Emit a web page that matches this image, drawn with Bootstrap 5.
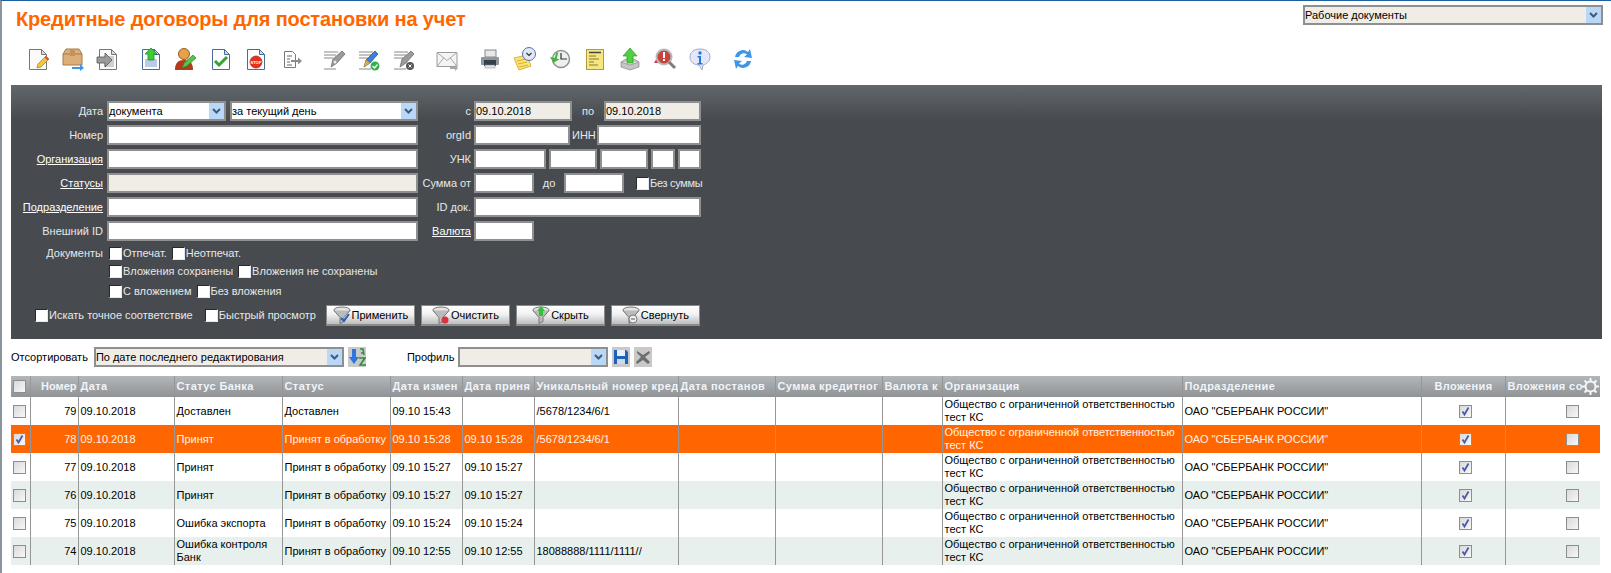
<!DOCTYPE html>
<html lang="ru">
<head>
    <meta charset="UTF-8">
    <title>Кредитные договоры для постановки на учет</title>
    <link href="https://cdn.jsdelivr.net/npm/bootstrap@5.3.2/dist/css/bootstrap.min.css" rel="stylesheet">
    <style>
        body {
            font: 11px/13px "Liberation Sans", Arial, sans-serif;
            color: #000;
            background: #fff;
            border-left: 2px solid #8c949b;
            border-top: 1px solid #1d5f9f;
            min-height: 573px;
            overflow: hidden;
        }
        .page-head { height: 46px; padding: 4px 8px 0 14px; }
        .page-title { font: bold 20px/28px "Liberation Sans", Arial, sans-serif; letter-spacing: -.15px; color: #ff6600; margin: 0; }
        .tool-strip { height: 24px; padding-left: 18px; margin-bottom: 14px; }
        .tool-btn { width: 35px; height: 24px; display: flex; justify-content: center; }
        .tool-gap { margin-left: 8px; }

        .filter-panel {
            margin: 0 9px;
            height: 254px;
            padding-top: 16px;
            color: #e6e8ea;
            background: linear-gradient(#62676b, #474b4f 34px);
        }
        .filter-panel a { color: #fff; }
        .frow { display: flex; height: 24px; }
        .chk-row { display: flex; align-items: center; height: 18px; padding-left: 98px; }
        .chk-first { margin-top: -1px; }
        .chk-third { margin-top: 2px; }
        .apply-row { display: flex; align-items: center; margin-top: 5px; padding-left: 24px; }
        .lab-left { width: 92px; margin-right: 4px; text-align: right; line-height: 21px; white-space: nowrap; }
        .lab-right { width: 56px; padding-right: 3px; text-align: right; line-height: 21px; white-space: nowrap; }
        .lab-to { width: 32px; text-align: center; line-height: 21px; }
        .lab-inn { width: 27px; padding-left: 2px; line-height: 21px; }
        .lab-sum-to { width: 30px; text-align: center; line-height: 21px; }
        .unk-group { display: flex; gap: 3px; }
        .no-sum { display: flex; align-items: center; height: 20px; margin-left: 12px; letter-spacing: -.3px; }

        .fld, .fld-sel {
            height: 20px;
            padding: 0;
            font: 11px/16px "Liberation Sans", Arial, sans-serif;
            color: #000;
            border: 2px solid #8f8f8f;
            border-radius: 0;
            background-color: #fff;
            outline: none;
            box-shadow: none;
            min-height: 0;
        }
        .fld[readonly] { background-color: #f0ede6; }
        .fld-sel {
            appearance: none;
            padding-right: 16px;
            background-image: url("data:image/svg+xml,%3Csvg xmlns='http://www.w3.org/2000/svg' width='15' height='20'%3E%3Crect width='15' height='20' fill='%23b9d8f8'/%3E%3Cpath d='M4 8l3.5 3.5L11 8' fill='none' stroke='%23425a78' stroke-width='2'/%3E%3C/svg%3E");
            background-repeat: no-repeat;
            background-position: right center;
        }
        .sel-tan { background-color: #f0ede6; }
        .w-23 { width: 23px; } .w-24 { width: 24px; } .w-48 { width: 48px; } .w-60 { width: 60px; }
        .w-72 { width: 72px; } .w-96 { width: 96px; } .w-97 { width: 97px; } .w-98 { width: 98px; }
        .w-104 { width: 104px; } .w-119 { width: 119px; } .w-150 { width: 150px; } .w-188 { width: 188px; }
        .w-227 { width: 227px; } .w-250 { width: 250px; } .w-300 { width: 300px; } .w-311 { width: 311px; }

        .chk-dark {
            appearance: none;
            width: 13px;
            height: 13px;
            margin: 0 1px 0 0;
            flex: none;
            background: #fff;
            border: 1px solid #e8e8e8;
            border-left-color: #26282a;
            border-top-color: #26282a;
        }
        .chk-txt { margin-right: 5px; white-space: nowrap; }
        .chk-wide { margin-right: 12px; }
        .chk-tight { margin-right: 4px; }

        .flt-btn {
            width: 89px;
            height: 21px;
            margin-left: 6px;
            padding: 0;
            display: flex;
            align-items: center;
            justify-content: center;
            gap: 1px;
            font: 11px/13px "Liberation Sans", Arial, sans-serif;
            color: #000;
            border: 1px solid #8a8a8a;
            border-bottom-width: 2px;
            border-radius: 0;
            background: linear-gradient(#fff, #f2f2f2 45%, #bdbdbd);
        }

        .sort-row { height: 20px; margin: 8px 0 9px 9px; line-height: 20px; }
        .sort-lab { margin-right: 6px; }
        .prof-lab { margin-left: 41px; margin-right: 4px; }
        .sort-ico { width: 18px; height: 20px; margin-left: 4px; flex: none; }

        .grid-wrap { margin: 0 9px; }
        .doc-grid {
            table-layout: fixed;
            width: 1589px;
            margin: 0;
            border-collapse: collapse;
            font-size: 11px;
            line-height: 13px;
            color: #000;
        }
        .doc-grid col:nth-child(1) { width: 19px; }
        .doc-grid col:nth-child(2) { width: 48px; }
        .doc-grid col:nth-child(3) { width: 96px; }
        .doc-grid col:nth-child(4) { width: 108px; }
        .doc-grid col:nth-child(5) { width: 108px; }
        .doc-grid col:nth-child(6) { width: 72px; }
        .doc-grid col:nth-child(7) { width: 72px; }
        .doc-grid col:nth-child(8) { width: 144px; }
        .doc-grid col:nth-child(9) { width: 97px; }
        .doc-grid col:nth-child(10) { width: 107px; }
        .doc-grid col:nth-child(11) { width: 60px; }
        .doc-grid col:nth-child(12) { width: 240px; }
        .doc-grid col:nth-child(13) { width: 239px; }
        .doc-grid col:nth-child(14) { width: 84px; }
        .doc-grid col:nth-child(15) { width: 95px; }
        .doc-grid th, .doc-grid td {
            padding: 0 1px 0 2px;
            border: 0;
            border-left: 1px solid #969696;
            box-shadow: none;
            background: transparent;
            vertical-align: middle;
            overflow: hidden;
            white-space: nowrap;
        }
        .doc-grid th:first-child, .doc-grid td:first-child { border-left: 0; padding: 0 2px 0 0; }
        .doc-grid thead tr { height: 21px; background: linear-gradient(#b3b7ba, #8f9396); }
        .doc-grid th { color: #f1f4f8; font-weight: bold; letter-spacing: .4px; }
        .doc-grid tbody tr { height: 28px; }
        .doc-grid tbody tr.alt-row { background: #e8f0ed; }
        .doc-grid tbody tr.sel-row { background: #ff6600; }
        .doc-grid tbody tr.sel-row td { color: #fff3e8; }
        .doc-grid .cell-num { text-align: right; padding-right: 1px; letter-spacing: 0; }
        .doc-grid .cell-mid { text-align: center; }
        .doc-grid td.cell-att { padding-left: 5px; padding-right: 0; }
        .th-last { position: relative; }
        .gear-ico { position: absolute; right: 1px; top: 2px; }

        .chk-grid {
            appearance: none;
            display: block;
            margin: 0 auto;
            width: 13px;
            height: 13px;
            border: 1px solid #8e8e8e;
            background: linear-gradient(135deg, #d9d9d9, #f8f8f8);
        }
        .chk-grid:checked {
            background-image: url("data:image/svg+xml,%3Csvg xmlns='http://www.w3.org/2000/svg' width='11' height='11'%3E%3Cpath d='M2.5 5.5l2 3L8.500 1.500' fill='none' stroke='%234a5aa8' stroke-width='1.800'/%3E%3C/svg%3E"), linear-gradient(135deg, #d9d9d9, #f8f8f8);
        }
        .chk-end { margin: 0 20px 0 auto; }
        .stop-txt { font: bold 4px "Liberation Sans", Arial, sans-serif; fill: #fff; }
    </style>
</head>
<body>
    <svg width="0" height="0" class="d-block" aria-hidden="true">
        <symbol id="page-blue" viewBox="0 0 24 24"><path d="M3.500 2.500h12l5 5v15h-17z" fill="#fbfdff" stroke="#4a6a9c"/><path d="M15.500 2.500v5h5z" fill="#cfe0f4" stroke="#4a6a9c"/></symbol>
        <symbol id="page-gray" viewBox="0 0 24 24"><path d="M3.500 2.500h12l5 5v15h-17z" fill="#fafafa" stroke="#777"/><path d="M15.500 2.500v5h5z" fill="#ddd" stroke="#777"/></symbol>
        <symbol id="funnel" viewBox="0 0 18 18"><ellipse cx="9" cy="4" rx="8" ry="3" fill="#e4e4e4" stroke="#777"/><path d="M1 4.500l6 7v6l4-2v-4l6-7" fill="#bbb" stroke="#777"/></symbol>
        <symbol id="sign-lines" viewBox="0 0 24 24"><path d="M2 5h14M2 8h12M2 11h9M2 22h12" stroke="#888" fill="none"/></symbol>
    </svg>

    <div class="page-head d-flex justify-content-between">
        <h1 class="page-title">Кредитные договоры для постановки на учет</h1>
        <select class="fld-sel sel-tan w-300"><option>Рабочие документы</option></select>
    </div>

    <div class="tool-strip d-flex">
        <span class="tool-btn"><svg width="24" height="24"><use href="#page-gray"/><path d="M11 21l1-4 8-8 3 3-8 8z" fill="#f5c542" stroke="#a07820" stroke-width=".7"/><path d="M20 9l3 3 -1.500 1.500-3-3z" fill="#d9534f"/></svg></span>
        <span class="tool-btn"><svg width="24" height="24"><path d="M2 7l3-5h13l3 5v11H2z" fill="#dcae78" stroke="#a67b4a"/><path d="M2 7h19" fill="none" stroke="#a67b4a"/><path d="M9 2v7h5V2" fill="#c4935c"/><path d="M11 20h8v-3l4 4-4 3v-2h-8z" fill="#3f94e6"/></svg></span>
        <span class="tool-btn"><svg width="24" height="24"><use href="#page-gray"/><rect x="8" y="9" width="10" height="11" fill="#cfcfcf"/><path d="M1 10h8V6l7 7-7 7v-4H1z" fill="#9b9b9b" stroke="#555" stroke-width=".8"/></svg></span>
        <span class="tool-btn tool-gap"><svg width="24" height="24"><use href="#page-blue"/><rect x="6" y="12" width="12" height="8" fill="#b9cbe8"/><path d="M12 1l6 6h-3v6H9V7H6z" fill="#3ecb3a" stroke="#1f8f20" stroke-width=".8"/></svg></span>
        <span class="tool-btn"><svg width="24" height="24"><circle cx="10" cy="7" r="5.500" fill="#e5a24a" stroke="#9a5a1c"/><path d="M1 23c0-7 3-10 9-10s9 3 9 10z" fill="#b5391f"/><path d="M8 21l2-5 9-8 3 3-9 8z" fill="#58c24a" stroke="#2f7f28" stroke-width=".7"/></svg></span>
        <span class="tool-btn"><svg width="24" height="24"><use href="#page-blue"/><path d="M6 14l4 4 8-8" fill="none" stroke="#35a32f" stroke-width="3"/></svg></span>
        <span class="tool-btn"><svg width="24" height="24"><use href="#page-blue"/><circle cx="12" cy="15" r="6" fill="#e8301f" stroke="#b01c10" stroke-width=".7"/><text class="stop-txt" x="12" y="16.500" text-anchor="middle">STOP</text></svg></span>
        <span class="tool-btn"><svg width="24" height="24"><path d="M5.500 4.500h8l3 3v13h-11z" fill="#fff" stroke="#777"/><path d="M8 9h5M8 12h3M8 15h3M8 18h5" stroke="#666"/><path d="M12 13h7v-2.500l4 3.500-4 3.500V15h-7z" fill="#8c8c8c"/></svg></span>
        <span class="tool-btn tool-gap"><svg width="24" height="24"><use href="#sign-lines"/><path d="M9 20l2-8 9-8 3 3-8 9z" fill="#9a9a9a" stroke="#666" stroke-width=".7"/><circle cx="13" cy="15" r="1.500" fill="#eee"/></svg></span>
        <span class="tool-btn"><svg width="24" height="24"><use href="#sign-lines"/><path d="M7 20l2-7 9-9 3 3-8 9z" fill="#3d7fd0" stroke="#1d4f90" stroke-width=".7"/><path d="M7 20l2-7 4 3z" fill="#e0b030"/><circle cx="18" cy="19" r="4.500" fill="#35b04a"/><path d="M15.500 19l2 2 3-3.500" stroke="#fff" stroke-width="1.200" fill="none"/></svg></span>
        <span class="tool-btn"><svg width="24" height="24"><use href="#sign-lines"/><path d="M8 20l2-8 9-8 3 3-8 9z" fill="#9a9a9a" stroke="#666" stroke-width=".7"/><circle cx="18" cy="19" r="4" fill="#555"/><path d="M16.500 17.500l3 3m0-3l-3 3" stroke="#fff"/></svg></span>
        <span class="tool-btn tool-gap"><svg width="24" height="24"><path d="M2 5.500h20v14H2z" fill="#f4f4f4" stroke="#9a9a9a"/><path d="M2 5.500l10 8 10-8M2 19.500l7-9M22 19.500l-7-9" fill="none" stroke="#aaa"/><path d="M15 20h5v-2l3 3-3 3v-2h-5z" fill="#a8a8a8"/></svg></span>
        <span class="tool-btn tool-gap"><svg width="24" height="24"><rect x="7" y="3" width="11" height="7" fill="#e8e8e8" stroke="#888"/><rect x="3" y="10" width="18" height="8" rx="1" fill="#8e979e"/><rect x="6" y="13" width="12" height="6" fill="#34404a"/><rect x="7" y="18" width="10" height="3" fill="#e5e5e5" stroke="#888" stroke-width=".5"/></svg></span>
        <span class="tool-btn"><svg width="24" height="24"><path d="M1 11l13-3 4 11-12 4z" fill="#fbe27a" stroke="#dcb52a"/><path d="M4 14l9-2M5 17l9-2M6 20l9-2" stroke="#d9b024"/><circle cx="16" cy="7" r="6.500" fill="#dfe7f7" stroke="#5a6fa8"/><path d="M13.500 6l2.500 2.500L18.500 6" fill="none" stroke="#333" stroke-width="1.200"/></svg></span>
        <span class="tool-btn"><svg width="24" height="24"><circle cx="13" cy="12" r="8.500" fill="#eef0ef" stroke="#8d9496" stroke-width="1.500"/><path d="M13 6v6h6" fill="none" stroke="#333" stroke-width="1.200"/><path d="M7 5v6H2l5 5 5-5H9V5z" fill="#43b635" transform="rotate(15 7 10)"/></svg></span>
        <span class="tool-btn"><svg width="24" height="24"><rect x="3.500" y="2.500" width="17" height="20" fill="#f5e77f" stroke="#b09c3c"/><path d="M6 5.500h12" stroke="#444" stroke-width="1.500"/><path d="M6 9h7M6 12h10M6 15h5M6 18h9" stroke="#8a7a30"/></svg></span>
        <span class="tool-btn"><svg width="24" height="24"><path d="M3 15l5-3h8l5 3v5l-9 3-9-3z" fill="#c5c5c5" stroke="#888" stroke-width=".7"/><path d="M3 15l9 3 9-3" fill="#eee" stroke="#888" stroke-width=".7"/><path d="M12 1l7 8h-4v7H9V9H5z" fill="#4fd03f" stroke="#2f9a2a" stroke-width=".7"/></svg></span>
        <span class="tool-btn"><svg width="24" height="24"><path d="M9 2L1 16h8z" fill="#d83b33"/><circle cx="11" cy="10" r="7.500" fill="#c9453c" stroke="#b4babd" stroke-width="2"/><rect x="10" y="5" width="2" height="6" fill="#fff"/><rect x="10" y="12" width="2" height="2" fill="#fff"/><path d="M16 15l6 6" stroke="#7d7d7d" stroke-width="3"/></svg></span>
        <span class="tool-btn"><svg width="24" height="24"><path d="M12 2c6 0 10 3 10 8 0 5-4 7-7 8l-1 5-3-5c-5 0-9-3-9-8 0-5 4-8 10-8z" fill="#e6e6fb" stroke="#a8a8c8"/><circle cx="12" cy="6" r="1.700" fill="#1e7be0"/><path d="M9.500 9H13v7h1.500v1.500h-5V16H11v-5.500H9.500z" fill="#1e7be0"/></svg></span>
        <span class="tool-btn tool-gap"><svg width="24" height="24"><path d="M4 10a8 8 0 0 1 13-5l2-3 2 9-8-1 3-2.500A5 5 0 0 0 8 10z" fill="#3d96ea"/><path d="M20 14a8 8 0 0 1-13 5l-2 3-2-9 8 1-3 2.500a5 5 0 0 0 8-2.500z" fill="#3d96ea"/></svg></span>
    </div>

    <form class="filter-panel">
        <div class="frow">
            <label class="lab-left">Дата</label>
            <select class="fld-sel w-119 me-1"><option>документа</option></select>
            <select class="fld-sel w-188"><option>за текущий день</option></select>
            <label class="lab-right">с</label>
            <input class="fld w-98" readonly value="09.10.2018">
            <label class="lab-to">по</label>
            <input class="fld w-97" readonly value="09.10.2018">
        </div>
        <div class="frow">
            <label class="lab-left">Номер</label>
            <input class="fld w-311">
            <label class="lab-right">orgId</label>
            <input class="fld w-96">
            <span class="lab-inn">ИНН</span>
            <input class="fld w-104">
        </div>
        <div class="frow">
            <label class="lab-left"><a href="#">Организация</a></label>
            <input class="fld w-311">
            <label class="lab-right">УНК</label>
            <span class="unk-group">
                <input class="fld w-72">
                <input class="fld w-48">
                <input class="fld w-48">
                <input class="fld w-24">
                <input class="fld w-23">
            </span>
        </div>
        <div class="frow">
            <label class="lab-left"><a href="#">Статусы</a></label>
            <input class="fld w-311" readonly>
            <label class="lab-right">Сумма от</label>
            <input class="fld w-60">
            <span class="lab-sum-to">до</span>
            <input class="fld w-60">
            <span class="no-sum">
                <input type="checkbox" class="chk-dark"><span>Без суммы</span>
            </span>
        </div>
        <div class="frow">
            <label class="lab-left"><a href="#">Подразделение</a></label>
            <input class="fld w-311">
            <label class="lab-right">ID док.</label>
            <input class="fld w-227">
        </div>
        <div class="frow">
            <label class="lab-left">Внешний ID</label>
            <input class="fld w-311">
            <label class="lab-right"><a href="#">Валюта</a></label>
            <input class="fld w-60">
        </div>
        <div class="chk-row chk-first position-relative">
            <span class="position-absolute start-0 lab-left">Документы</span>
            <input type="checkbox" class="chk-dark"><span class="chk-txt">Отпечат.</span>
            <input type="checkbox" class="chk-dark"><span class="chk-txt">Неотпечат.</span>
        </div>
        <div class="chk-row">
            <input type="checkbox" class="chk-dark"><span class="chk-txt">Вложения сохранены</span>
            <input type="checkbox" class="chk-dark"><span class="chk-txt">Вложения не сохранены</span>
        </div>
        <div class="chk-row chk-third">
            <input type="checkbox" class="chk-dark"><span class="chk-txt">С вложением</span>
            <input type="checkbox" class="chk-dark"><span class="chk-txt">Без вложения</span>
        </div>
        <div class="apply-row">
            <input type="checkbox" class="chk-dark"><span class="chk-txt chk-wide">Искать точное соответствие</span>
            <input type="checkbox" class="chk-dark"><span class="chk-txt chk-tight">Быстрый просмотр</span>
            <button type="button" class="flt-btn"><svg width="18" height="18"><use href="#funnel"/><path d="M8 12l3 3 5-7" fill="none" stroke="#2a5fc0" stroke-width="2"/></svg>Применить</button>
            <button type="button" class="flt-btn"><svg width="18" height="18"><use href="#funnel"/><circle cx="13" cy="14" r="3.500" fill="#d8323c"/></svg>Очистить</button>
            <button type="button" class="flt-btn"><svg width="18" height="18"><use href="#funnel"/><path d="M9 0l4 5h-2v5H7V5H5z" fill="#35c23a"/></svg>Скрыть</button>
            <button type="button" class="flt-btn"><svg width="18" height="18"><use href="#funnel"/><circle cx="11" cy="13" r="4" fill="#eee" stroke="#777"/><path d="M9 13h4" stroke="#555"/></svg>Свернуть</button>
        </div>
    </form>

    <div class="sort-row d-flex">
        <span class="sort-lab">Отсортировать</span>
        <select class="fld-sel sel-tan w-250"><option>По дате последнего редактирования</option></select>
        <svg class="sort-ico" viewBox="0 0 18 20"><rect width="18" height="20" fill="#c9c9c9"/><path d="M4 2h4v8h3l-5 7-5-7h3z" fill="#2a78dc"/><path d="M12 2h3l1 6M13 6h3M11 11h6l-5 7h6" fill="none" stroke="#2c8a3a" stroke-width="1.500"/></svg>
        <span class="prof-lab">Профиль</span>
        <select class="fld-sel sel-tan w-150"></select>
        <svg class="sort-ico" viewBox="0 0 18 20"><rect width="18" height="20" fill="#c9c9c9"/><path d="M2 3h12l2 2v12H2z" fill="#1f63b8"/><rect x="5" y="3" width="8" height="6" fill="#e8eef8"/><rect x="5" y="12" width="8" height="5" fill="#cfd8e8"/></svg>
        <svg class="sort-ico" viewBox="0 0 18 20"><rect width="18" height="20" fill="#c9c9c9"/><path d="M3 4l6 4 6-4 1 2-5 4 5 5-2 2-5-4-6 4-1-2 5-5-4-4z" fill="#6e6e6e"/></svg>
    </div>

    <div class="grid-wrap">
        <table class="table doc-grid">
            <colgroup>
                <col><col><col><col><col><col><col><col><col><col><col><col><col><col><col>
            </colgroup>
            <thead>
                <tr>
                    <th><input type="checkbox" class="chk-grid"></th><th class="cell-num">Номер</th><th>Дата</th><th>Статус Банка</th><th>Статус</th>
                    <th>Дата измен</th><th>Дата приня</th><th>Уникальный номер кред</th><th>Дата постанов</th><th>Сумма кредитног</th>
                    <th>Валюта к</th><th>Организация</th><th>Подразделение</th><th class="cell-mid">Вложения</th>
                    <th class="th-last">Вложения со
                        <svg class="gear-ico" width="17" height="17" viewBox="0 0 17 17"><circle cx="8.500" cy="8.500" r="5" fill="none" stroke="#f4f6f8" stroke-width="2"/><path d="M8.500 0v4M8.500 13v4M0 8.500h4M13 8.500h4M2.500 2.500l2.800 2.800M11.700 11.700l2.800 2.800M14.500 2.500l-2.800 2.800M5.300 11.700l-2.800 2.800" stroke="#f4f6f8" stroke-width="2"/></svg>
                    </th>
                </tr>
            </thead>
            <tbody>
                <tr>
                    <td><input type="checkbox" class="chk-grid"></td><td class="cell-num">79</td><td>09.10.2018</td><td>Доставлен</td><td>Доставлен</td>
                    <td>09.10 15:43</td><td></td><td>/5678/1234/6/1</td><td></td><td></td><td></td>
                    <td>Общество с ограниченной ответственностью<br>тест КС</td><td>ОАО "СБЕРБАНК РОССИИ"</td>
                    <td class="cell-att"><input type="checkbox" class="chk-grid" checked></td><td><input type="checkbox" class="chk-grid chk-end"></td>
                </tr>
                <tr class="sel-row">
                    <td><input type="checkbox" class="chk-grid" checked></td><td class="cell-num">78</td><td>09.10.2018</td><td>Принят</td><td>Принят в обработку</td>
                    <td>09.10 15:28</td><td>09.10 15:28</td><td>/5678/1234/6/1</td><td></td><td></td><td></td>
                    <td>Общество с ограниченной ответственностью<br>тест КС</td><td>ОАО "СБЕРБАНК РОССИИ"</td>
                    <td class="cell-att"><input type="checkbox" class="chk-grid" checked></td><td><input type="checkbox" class="chk-grid chk-end"></td>
                </tr>
                <tr>
                    <td><input type="checkbox" class="chk-grid"></td><td class="cell-num">77</td><td>09.10.2018</td><td>Принят</td><td>Принят в обработку</td>
                    <td>09.10 15:27</td><td>09.10 15:27</td><td></td><td></td><td></td><td></td>
                    <td>Общество с ограниченной ответственностью<br>тест КС</td><td>ОАО "СБЕРБАНК РОССИИ"</td>
                    <td class="cell-att"><input type="checkbox" class="chk-grid" checked></td><td><input type="checkbox" class="chk-grid chk-end"></td>
                </tr>
                <tr class="alt-row">
                    <td><input type="checkbox" class="chk-grid"></td><td class="cell-num">76</td><td>09.10.2018</td><td>Принят</td><td>Принят в обработку</td>
                    <td>09.10 15:27</td><td>09.10 15:27</td><td></td><td></td><td></td><td></td>
                    <td>Общество с ограниченной ответственностью<br>тест КС</td><td>ОАО "СБЕРБАНК РОССИИ"</td>
                    <td class="cell-att"><input type="checkbox" class="chk-grid" checked></td><td><input type="checkbox" class="chk-grid chk-end"></td>
                </tr>
                <tr>
                    <td><input type="checkbox" class="chk-grid"></td><td class="cell-num">75</td><td>09.10.2018</td><td>Ошибка экспорта</td><td>Принят в обработку</td>
                    <td>09.10 15:24</td><td>09.10 15:24</td><td></td><td></td><td></td><td></td>
                    <td>Общество с ограниченной ответственностью<br>тест КС</td><td>ОАО "СБЕРБАНК РОССИИ"</td>
                    <td class="cell-att"><input type="checkbox" class="chk-grid" checked></td><td><input type="checkbox" class="chk-grid chk-end"></td>
                </tr>
                <tr class="alt-row">
                    <td><input type="checkbox" class="chk-grid"></td><td class="cell-num">74</td><td>09.10.2018</td><td>Ошибка контроля<br>Банк</td><td>Принят в обработку</td>
                    <td>09.10 12:55</td><td>09.10 12:55</td><td>18088888/1111/1111//</td><td></td><td></td><td></td>
                    <td>Общество с ограниченной ответственностью<br>тест КС</td><td>ОАО "СБЕРБАНК РОССИИ"</td>
                    <td class="cell-att"><input type="checkbox" class="chk-grid" checked></td><td><input type="checkbox" class="chk-grid chk-end"></td>
                </tr>
            </tbody>
        </table>
    </div>

    <script src="https://cdn.jsdelivr.net/npm/bootstrap@5.3.2/dist/js/bootstrap.bundle.min.js"></script>
</body>
</html>
